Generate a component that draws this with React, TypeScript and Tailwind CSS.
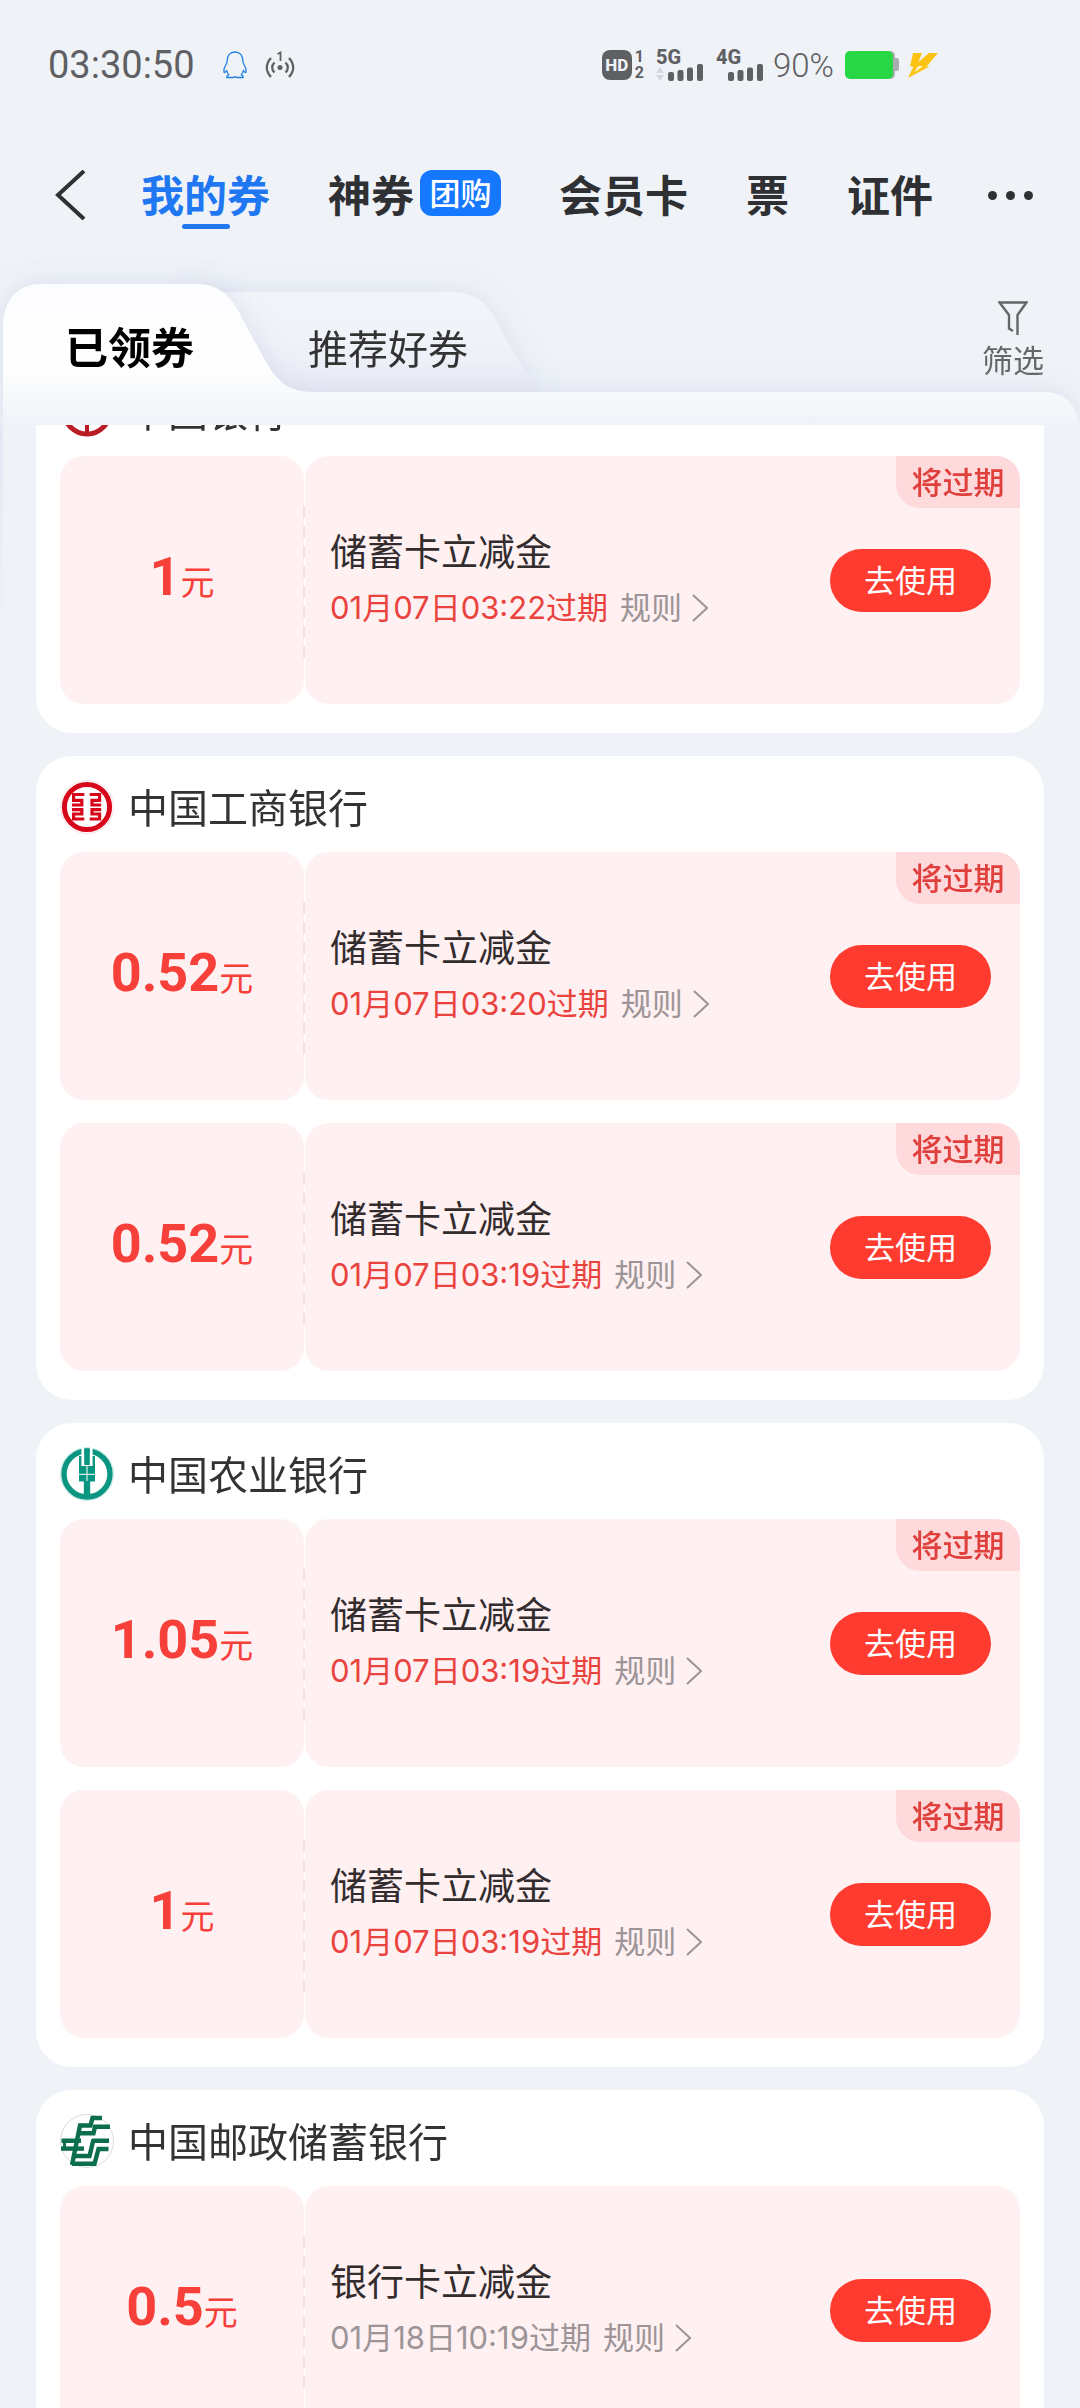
import React from 'react';

type BankId = 'boc' | 'icbc' | 'abc' | 'psbc';

interface Coupon {
  id: number;
  amount: string;
  title: string;
  expires: string;
  expiring: boolean;
}

interface BankGroup {
  bank: BankId;
  name: string;
  coupons: Coupon[];
}

const groups: BankGroup[] = [
  {
    bank: 'boc',
    name: '中国银行',
    coupons: [{ id: 1, amount: '1', title: '储蓄卡立减金', expires: '01月07日03:22过期', expiring: true }],
  },
  {
    bank: 'icbc',
    name: '中国工商银行',
    coupons: [
      { id: 2, amount: '0.52', title: '储蓄卡立减金', expires: '01月07日03:20过期', expiring: true },
      { id: 3, amount: '0.52', title: '储蓄卡立减金', expires: '01月07日03:19过期', expiring: true },
    ],
  },
  {
    bank: 'abc',
    name: '中国农业银行',
    coupons: [
      { id: 4, amount: '1.05', title: '储蓄卡立减金', expires: '01月07日03:19过期', expiring: true },
      { id: 5, amount: '1', title: '储蓄卡立减金', expires: '01月07日03:19过期', expiring: true },
    ],
  },
  {
    bank: 'psbc',
    name: '中国邮政储蓄银行',
    coupons: [{ id: 6, amount: '0.5', title: '银行卡立减金', expires: '01月18日10:19过期', expiring: false }],
  },
];

const BankLogo = ({ bank }: { bank: BankId }) => (
  <svg viewBox="0 0 54 54" className="size-[54px] shrink-0" fill="none" aria-hidden="true">
    {bank === 'boc' && (
      <g stroke="#b81c25">
        <circle cx="27" cy="27" r="23" strokeWidth="5" />
        <path d="M27 4V17M27 37V50" strokeWidth="4" />
        <rect x="17" y="18" width="20" height="18" rx="3" strokeWidth="4" />
      </g>
    )}
    {bank === 'icbc' && (
      <g stroke="#d7061a">
        <circle cx="27" cy="27" r="26.5" stroke="#f9dfe1" strokeWidth="1" />
        <circle cx="27" cy="27" r="22.6" strokeWidth="5" />
        <g strokeWidth="3.2">
          <path d="M24.3 14.5H13.6V20.4H21.8V25H12" />
          <path d="M12 29.6H21.8V34H13.6V39H24.3" />
          <path d="M29.7 14.5H39.6V20.4H32V25H41.2" />
          <path d="M41.2 29.6H32V34H39.6V39H29.7" />
        </g>
      </g>
    )}
    {bank === 'abc' && (
      <>
        <circle cx="27" cy="27" r="26.5" stroke="#c5e8e2" strokeWidth="1" />
        <circle cx="27" cy="27" r="23" stroke="#0b9681" strokeWidth="5.4" />
        <path d="M21.400 0H24.200V19H29.800V0H32.600V20H21.400Z" fill="#fff" />
        <g fill="#0b9681">
          <path d="M24.2 1.500H29.800V18H24.200ZM19 9H21.400V19H32.600V9H35V34.500H30.200V50H23.800V34.500H19Z" />
        </g>
        <path d="M19 27.300H35M27 19V34" stroke="#fff" strokeWidth="1" />
      </>
    )}
    {bank === 'psbc' && (
      <>
        <circle cx="27" cy="27" r="26.5" stroke="#d9dbdd" strokeWidth="1" />
        <g stroke="#0c6e4e" strokeWidth="4.400">
          <path d="M12 51L20 11.500H30.500L32.500 4H42" />
          <path d="M18 19.300H33.500L35 12.800H50" />
          <path d="M1.500 26.800H21M32 26.800H49" />
          <path d="M1 34.600H24" />
          <path d="M14 42H29.500L33.500 25.500" />
          <path d="M12 49.800H34.500L38.500 35H48.500" />
        </g>
        <path d="M3 30.700H6" stroke="#0c6e4e" strokeWidth="5" />
      </>
    )}
  </svg>
);

const SignalBars = () => (
  <svg viewBox="0 0 35 17" className="h-[17px] w-[35px]" fill="#5f6063" aria-hidden="true">
    <rect x="0" y="8" width="6" height="9" rx="2" />
    <rect x="9.5" y="6" width="6" height="11" rx="2" />
    <rect x="19" y="3.5" width="6" height="13.5" rx="2" />
    <rect x="29" y="0" width="6" height="17" rx="2" />
  </svg>
);

const Network = ({ label, active }: { label: string; active?: boolean }) => (
  <div className="flex w-[47px] flex-col">
    <span className="font-[Roboto] text-[20px] leading-[14px] font-extrabold">{label}</span>
    <div className="flex items-end justify-end gap-1">
      {active && (
        <svg viewBox="0 0 8 14" className="h-[14px] w-2" fill="#d3d6da" aria-hidden="true">
          <path d="M0 6L4 0L8 6ZM0 8L4 14L8 8Z" />
        </svg>
      )}
      <SignalBars />
    </div>
  </div>
);

const StatusBar = () => (
  <div className="flex h-[130px] items-center px-12 text-[#5f6063]">
    <span className="font-[Roboto] text-[38px] leading-none">03:30:50</span>
    <svg viewBox="0 0 24 28" className="ml-[28px] h-7 w-6" fill="none" stroke="#1e7fe0" strokeWidth="1.3" strokeLinejoin="round" aria-hidden="true">
      <path d="M12 1C7 1 4.200 4.500 4.200 9.500C4.200 11.500 3.800 12.500 2.500 14.500C1 17 .6 19.500 1.200 21.500C2.500 21.500 3.300 20.200 3.700 19.500C4 21.500 4.800 22.800 5.800 23.800C4.500 24.500 3.500 25.300 3.800 26.500H10.500L12 25.500L13.500 26.500H20.200C20.500 25.300 19.500 24.500 18.200 23.800C19.200 22.800 20 21.500 20.300 19.500C20.700 20.200 21.500 21.500 22.800 21.500C23.400 19.500 23 17 21.500 14.500C20.200 12.500 19.800 11.500 19.800 9.500C19.800 4.500 17 1 12 1Z" />
    </svg>
    <svg viewBox="0 0 30 28" className="ml-[18px] h-7 w-[30px]" fill="none" stroke="#5f6063" strokeWidth="2.4" aria-hidden="true">
      <path d="M6 7C.5 13 .5 20 6 26M24 7C29.500 13 29.500 20 24 26M9.500 11.500C6.500 14.500 6.500 18.500 9.500 21.500M20.500 11.500C23.500 14.500 23.500 18.500 20.500 21.500" />
      <circle cx="15" cy="16.500" r="2.5" fill="#5f6063" stroke="none" />
      <path d="M12.500 3L15.500 1.500V10" strokeWidth="1.8" />
    </svg>

    <div className="ml-auto flex items-center pr-[94px]">
      <span className="flex h-[30px] w-[30px] items-center justify-center rounded-lg bg-[#5f6063] font-[Roboto] text-[17px] leading-none font-extrabold text-[#eff3f8]">
        HD
      </span>
      <span className="ml-[3px] flex flex-col items-center font-[Roboto] text-[16px] leading-4 font-bold">
        <span>1</span>
        <span>2</span>
      </span>
      <div className="ml-3 flex gap-[13px]">
        <Network label="5G" active />
        <Network label="4G" />
      </div>
      <span className="ml-[10px] font-[Roboto] text-[33px] leading-none font-light">90%</span>
      <svg viewBox="0 0 54 28" className="ml-[11px] h-7 w-[54px]" aria-hidden="true">
        <path d="M44 0C50 0 50 3 50 7H51.500C53.500 7 54 8 54 10V17C54 19 53.500 20 51.500 20H50C50 25 50 28 44 28Z" fill="#a9abae" />
        <rect width="48" height="28" rx="5" fill="#28d745" />
      </svg>
      <svg viewBox="0 0 30 25" className="ml-[9px] h-[25px] w-[30px]" fill="#fdc312" aria-hidden="true">
        <path d="M5 0H14L10.500 9L21 0H30L18.500 13.500H21.500L0 25L5.500 13.500H2Z" />
        <path d="M11 13H15L6.500 19.500L9 14.500Z" fill="#fff6d8" />
      </svg>
    </div>
  </div>
);

const TopNav = () => (
  <nav className="flex h-[130px] items-center justify-between pr-[47px] pl-[55px] text-[43px] leading-none font-bold whitespace-nowrap text-[#2f3033]">
    <button type="button" aria-label="返回">
      <svg viewBox="0 0 31 50" className="h-[50px] w-[31px]" fill="none" stroke="#2f3033" strokeWidth="4" aria-hidden="true">
        <path d="M29 1L3 25L29 49" />
      </svg>
    </button>
    <div className="flex items-center gap-[58px] pb-1">
      <a href="#mine" className="relative text-[#1f77f2]">
        我的券
        <span className="absolute -bottom-[14px] left-1/2 h-[5px] w-12 -translate-x-1/2 rounded-full bg-[#1f77f2]" />
      </a>
      <a href="#deals" className="flex items-center gap-[6px]">
        神券
        <span className="flex h-[46px] w-[81px] items-center justify-center rounded-xl bg-[#1677ff] pb-1 text-[31px] font-medium text-white">
          团购
        </span>
      </a>
      <a href="#cards">会员卡</a>
      <a href="#tickets">票</a>
      <a href="#ids">证件</a>
    </div>
    <button type="button" aria-label="更多" className="flex gap-[9px]">
      <span className="size-[9px] rounded-full bg-[#2f3033]" />
      <span className="size-[9px] rounded-full bg-[#2f3033]" />
      <span className="size-[9px] rounded-full bg-[#2f3033]" />
    </button>
  </nav>
);

// Folder-style tab outlines; the right end hangs off x=100% so it follows the window
const TabShapes = () => (
  <svg className="absolute inset-0 h-full w-full" aria-hidden="true">
    <defs>
      <linearGradient id="tabFront" gradientUnits="userSpaceOnUse" x1="0" y1="24" x2="0" y2="165">
        <stop offset="0" stopColor="#fcfdff" />
        <stop offset=".6" stopColor="#fefefe" />
        <stop offset="1" stopColor="#eff3f8" />
      </linearGradient>
      <linearGradient id="tabBack" x1="0" y1="0" x2="0" y2="1">
        <stop offset="0" stopColor="#f2f5f9" />
        <stop offset=".5" stopColor="#eff2f8" />
        <stop offset="1" stopColor="#e9ecf6" />
      </linearGradient>
      <filter id="tabShadow" x="-20%" y="-40%" width="140%" height="180%">
        <feDropShadow dx="0" dy="0" stdDeviation="14" floodColor="#7c86bd" floodOpacity=".18" />
      </filter>
    </defs>
    <path
      d="M190 32H452C478 32 488 46 497 62C509 84 522 110 543 132H190Z"
      fill="url(#tabBack)"
      filter="url(#tabShadow)"
    />
    <g fill="url(#tabFront)" filter="url(#tabShadow)">
      <path d="M3 165V68C3 42 16 24 42 24H196C224 24 234 42 243 60L266 102C277 121 288 132 312 132H600V165Z" />
      <svg x="100%" overflow="visible">
        <path d="M-780 165V132H-36C-16 132 -2 146 -2 165Z" />
      </svg>
    </g>
  </svg>
);

const CouponTabs = () => (
  <div className="relative h-[165px]">
    <TabShapes />
    <div className="relative flex h-full items-center pr-9 pl-[65px]">
      <button type="button" className="mt-1 text-[43px] leading-[50px] font-bold text-black">
        已领券
      </button>
      <button type="button" className="mt-2 ml-[114px] text-[40px] leading-[50px] text-[#333]">
        推荐好券
      </button>
      <button type="button" className="mb-[6px] ml-auto flex flex-col items-center gap-1 text-[31px] leading-10 text-[#666]">
        <svg viewBox="0 0 30 34" className="h-[34px] w-[30px]" fill="none" stroke="#666" strokeWidth="2.4" aria-hidden="true">
          <path d="M19.500 34V14L28.500 1.500H1.500L11 14V27.500L15 30" />
        </svg>
        筛选
      </button>
    </div>
  </div>
);

const CouponRow = ({ coupon }: { coupon: Coupon }) => (
  <li className="relative flex h-[248px] gap-px">
    <div className="flex w-[244px] shrink-0 items-center justify-center rounded-3xl bg-[#fff0f2] pb-[3px] text-[#f7403a]">
      <p className="flex items-baseline">
        <span className="font-[Roboto] text-[54px] leading-[64px] font-bold">{coupon.amount}</span>
        <span className="text-[34px] leading-[64px]">元</span>
      </p>
    </div>
    <span className="absolute top-[50px] left-[243px] h-[152px] w-[2px] bg-[repeating-linear-gradient(to_bottom,#f8dde1_0_12px,transparent_12px_20px)]" />
    <div className="relative flex flex-1 items-center justify-between overflow-hidden rounded-3xl bg-[#fff0f2] pr-[29px] pl-[25px]">
      <div className="flex flex-col gap-2 pb-1">
        <h3 className="text-[37px] leading-[52px] text-[#332c2e]">{coupon.title}</h3>
        <div className="flex items-center gap-3 font-[Inter,'Noto_Sans_CJK_SC',sans-serif] text-[31px] leading-[48px] text-[#9c9496]">
          <span className={coupon.expiring ? 'text-[#ea433e]' : ''}>{coupon.expires}</span>
          <a href="#rules" className="flex items-center gap-[10px]">
            规则
            <svg viewBox="0 0 16 28" className="h-7 w-4" fill="none" stroke="#9c9496" strokeWidth="2" aria-hidden="true">
              <path d="M1 1L15 14L1 27" />
            </svg>
          </a>
        </div>
      </div>
      <button type="button" className="h-[63px] w-[161px] rounded-full bg-[#ff3b30] pb-1 text-[31px] leading-none text-white">
        去使用
      </button>
      {coupon.expiring && (
        <span className="absolute top-0 right-0 flex h-[52px] w-[124px] items-center justify-center rounded-bl-3xl bg-[#ffdadd] pb-[3px] text-[31px] leading-none font-medium text-[#e0403c]">
          将过期
        </span>
      )}
    </div>
  </li>
);

const BankCard = ({ group }: { group: BankGroup }) => (
  <section className="rounded-[36px] bg-white px-6 pb-[29px]">
    <header className="flex h-24 items-center gap-[14px] pt-[6px]">
      <BankLogo bank={group.bank} />
      <h2 className="pb-[3px] text-[40px] leading-[54px] text-[#333]">{group.name}</h2>
    </header>
    <ul className="flex flex-col gap-[23px]">
      {group.coupons.map((coupon) => (
        <CouponRow key={coupon.id} coupon={coupon} />
      ))}
    </ul>
  </section>
);

export default function App() {
  return (
    <div className="flex h-screen flex-col overflow-hidden bg-[#eff3f8] font-['Noto_Sans_CJK_SC',sans-serif]">
      <div className="shrink-0">
        <StatusBar />
        <TopNav />
        <CouponTabs />
      </div>
      {/* list is scrolled a little, so the first card slides under the tabs */}
      <main className="relative min-h-0 flex-1 overflow-hidden">
        <span className="absolute top-0 left-0 h-[215px] w-[3px] bg-linear-to-b from-[#e4e7f2] to-[#eff3f8]" />
        <div className="-mt-[65px] flex flex-col gap-[23px] px-9">
          {groups.map((group) => (
            <BankCard key={group.bank} group={group} />
          ))}
        </div>
      </main>
    </div>
  );
}
